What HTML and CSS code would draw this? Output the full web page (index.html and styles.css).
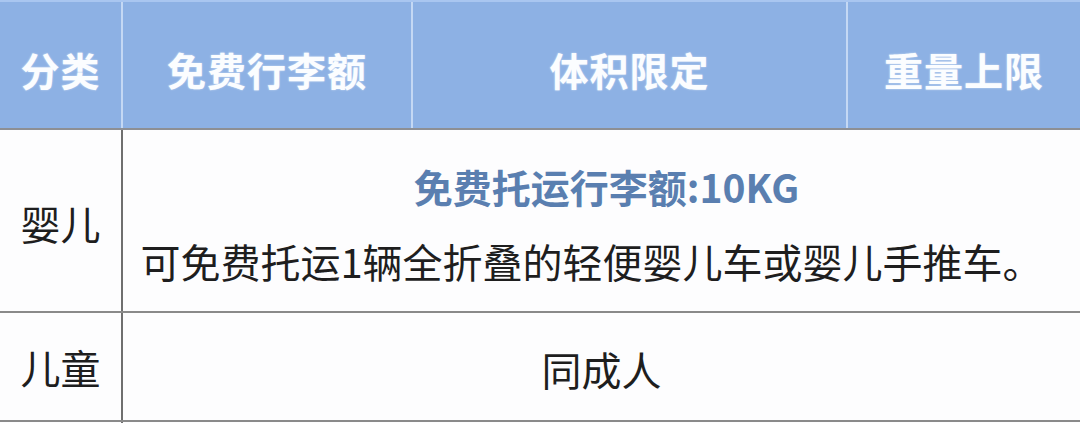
FILE: index.html
```html
<!DOCTYPE html>
<html lang="zh-CN">
<head>
<meta charset="utf-8">
<title>行李额</title>
<link rel="stylesheet" href="styles.css">
</head>
<body>
<div class="sheet">
  <div class="head">
    <div class="hcell">分类</div>
    <div class="hcell">免费行李额</div>
    <div class="hcell">体积限定</div>
    <div class="hcell last">重量上限</div>
  </div>
  <div class="row infant">
    <div class="cat">婴儿</div>
    <div class="content">
      <div class="hl">免费托运行李额:10KG</div>
      <div class="txt wide">可免费托运1辆全折叠的轻便婴儿车或婴儿手推车。</div>
    </div>
  </div>
  <div class="row child">
    <div class="cat">儿童</div>
    <div class="content">
      <div class="txt">同成人</div>
    </div>
  </div>
  <div class="row tail">
    <div class="cat"></div>
    <div class="content"></div>
  </div>
</div>
</body>
</html>
```

FILE: styles.css
```css
html, body {
  margin: 0;
  padding: 0;
  background: #fdfdfe;
}
body {
  width: 1080px;
  height: 423px;
  overflow: hidden;
  font-family: "Noto Sans CJK SC", "Noto Sans", sans-serif;
}
.sheet {
  display: flex;
  flex-direction: column;
}
.head {
  display: grid;
  grid-template-columns: 123px 290px 435px 1fr;
  background: #8db1e4;
  border-top: 2px solid #a9c6f0;
  box-sizing: border-box;
  border-bottom: 2px solid #8d8f94;
  height: 130px;
}
.hcell {
  display: flex;
  align-items: center;
  justify-content: center;
  color: #fbfdff;
  font-weight: 700;
  font-size: 39px;
  letter-spacing: 1px;
  padding-top: 7px;
  border-right: 2px solid #c4d8f4;
  text-shadow: 0 0 2px rgba(255,255,255,0.6);
}
.hcell.last {
  border-right: none;
}
.row {
  display: grid;
  grid-template-columns: 123px 1fr;
  border-bottom: 2px solid #8a8a8a;
}
.cat {
  display: flex;
  align-items: center;
  justify-content: center;
  border-right: 2px solid #6f6f6f;
  font-size: 40px;
  color: #1e1e1e;
}
.infant .cat {
  padding-top: 4px;
}
.content {
  display: flex;
  flex-direction: column;
  align-items: center;
  justify-content: center;
  color: #1e1e1e;
}
.infant {
  height: 181px;
}
.child {
  height: 107px;
}
.tail {
  height: 10px;
  border-bottom: none;
}
.infant .content {
  padding-top: 6px;
  gap: 27px;
}
.hl {
  color: #5a7fb0;
  font-weight: 700;
  font-size: 39px;
  line-height: 48px;
  padding-left: 10px;
}
.txt {
  font-size: 40px;
  line-height: 48px;
}
.txt.wide {
  margin-right: 20px;
}
.child .txt {
  padding-top: 4px;
}
```
